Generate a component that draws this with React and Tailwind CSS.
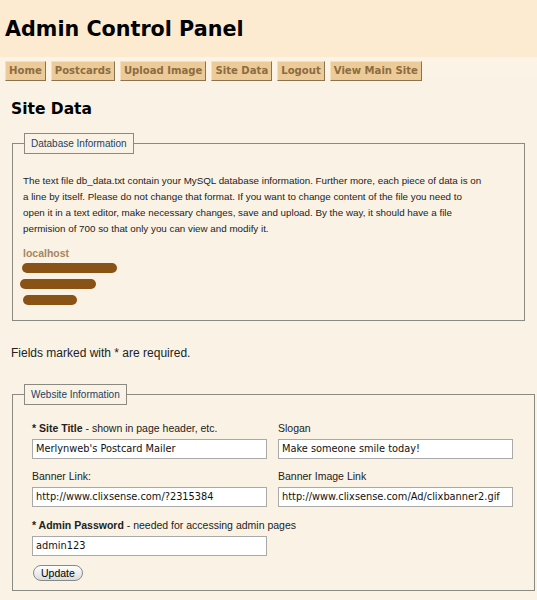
import React from 'react';

const navItems = ['Home', 'Postcards', 'Upload Image', 'Site Data', 'Logout', 'View Main Site'];

function Field({ label, value, width = 'w-[235px]' }) {
    return (
        <div>
            <div className="text-[10.5px] leading-[14px] text-[#222]">{label}</div>
            <input
                readOnly
                value={value}
                className={`${width} mt-[2px] h-[20px] border border-[#a9a9a9] bg-white px-[3px] text-[9.8px] text-[#111] font-['DejaVu_Sans',sans-serif] outline-none`}
            />
        </div>
    );
}

function Redacted({ w, ml = 0 }) {
    return <div className="h-[10px] rounded-full bg-[#8a5316]" style={{ width: w, marginLeft: ml }} />;
}

export default function App() {
    return (
        <div className="min-h-[600px] bg-[#faf3e5] font-['Liberation_Sans',Arial,sans-serif]">
            <div className="h-[57px] bg-[#fdebd1] pl-[5px] pt-[16px]">
                <h1 className="text-[20.7px] leading-[26px] font-bold text-black font-['DejaVu_Sans',sans-serif]">
                    Admin Control Panel
                </h1>
            </div>

            <div className="bg-gradient-to-b from-[#fdf4e6] to-[#faf3e5] pt-[4px] pl-[5px] flex gap-[5px]">
                {navItems.map((item) => (
                    <span
                        key={item}
                        className="h-[20px] px-[3px] leading-[18px] bg-[#eccb98] border border-[#f5dfbd] border-r-[#8a7350] border-b-[#8a7350] text-[10.1px] font-bold text-[#8c6c42] font-['DejaVu_Sans',sans-serif]"
                    >
                        {item}
                    </span>
                ))}
            </div>

            <h2 className="mt-[18px] ml-[11px] text-[15.5px] leading-[20px] font-bold text-black font-['DejaVu_Sans',sans-serif]">
                Site Data
            </h2>

            <fieldset className="mt-[14px] ml-[12px] w-[513px] h-[188px] border border-[#8a8a82] px-[10px]">
                <legend className="ml-[1px] border border-[#8a8a82] px-[6px] h-[21px] leading-[19px] text-[10px] text-[#213f63]">
                    Database Information
                </legend>
                <p className="mt-[19px] whitespace-nowrap text-[9.8px] leading-[16px] text-[#222]">
                    The text file db_data.txt contain your MySQL database information. Further more, each piece of data is on<br />
                    a line by itself. Please do not change that format. If you want to change content of the file you need to<br />
                    open it in a text editor, make necessary changes, save and upload. By the way, it should have a file<br />
                    permision of 700 so that only you can view and modify it.
                </p>
                <div className="mt-[9px] text-[10.5px] leading-[14px] font-bold text-[#a58660]">localhost</div>
                <div className="mt-[3px] flex flex-col gap-[6px]">
                    <Redacted w={95} ml={-1} />
                    <Redacted w={76} ml={-3} />
                    <Redacted w={54} ml={0} />
                </div>
            </fieldset>

            <p className="mt-[25px] ml-[11px] text-[12px] leading-[14px] text-[#222]">
                Fields marked with * are required.
            </p>

            <fieldset className="mt-[24px] ml-[12px] w-[517px] h-[207px] border border-[#8a8a82] pl-[19px] pr-[10px]">
                <legend className="-ml-[8px] border border-[#8a8a82] px-[6px] h-[21px] leading-[19px] text-[10px] text-[#213f63]">
                    Website Information
                </legend>
                <div className="mt-[16px] grid grid-cols-[246px_246px] gap-y-[10px]">
                    <Field
                        label={<><b>* Site Title</b> - shown in page header, etc.</>}
                        value="Merlynweb's Postcard Mailer"
                    />
                    <Field label="Slogan" value="Make someone smile today!" />
                    <Field label="Banner Link:" value="http://www.clixsense.com/?2315384" />
                    <Field label="Banner Image Link" value="http://www.clixsense.com/Ad/clixbanner2.gif" />
                    <div className="col-span-2 mt-[1px]">
                        <Field
                            label={<><b>* Admin Password</b> - needed for accessing admin pages</>}
                            value="admin123"
                        />
                    </div>
                </div>
                <button className="mt-[9px] ml-[1px] h-[16px] px-[7px] rounded-full border border-[#888] bg-gradient-to-b from-white to-[#dcdcdc] text-[10.5px] leading-[14px] text-black">
                    Update
                </button>
            </fieldset>
        </div>
    );
}
